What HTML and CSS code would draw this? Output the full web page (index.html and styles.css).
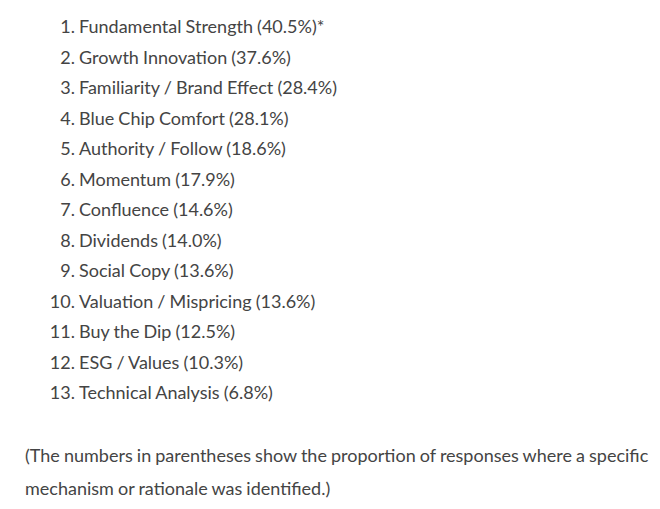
FILE: index.html
```html
<!DOCTYPE html>
<html lang="en">
<head>
<meta charset="utf-8">
<link rel="stylesheet" href="styles.css">
</head>
<body>
<div class="content">
  <ol class="ranking">
    <li>Fundamental Strength (40.5%)*</li>
    <li>Growth Innovation (37.6%)</li>
    <li>Familiarity / Brand Effect (28.4%)</li>
    <li>Blue Chip Comfort (28.1%)</li>
    <li>Authority / Follow (18.6%)</li>
    <li>Momentum (17.9%)</li>
    <li>Confluence (14.6%)</li>
    <li>Dividends (14.0%)</li>
    <li>Social Copy (13.6%)</li>
    <li>Valuation / Mispricing (13.6%)</li>
    <li>Buy the Dip (12.5%)</li>
    <li>ESG / Values (10.3%)</li>
    <li>Technical Analysis (6.8%)</li>
  </ol>
  <p class="note">(The numbers in parentheses show the proportion of responses where a specific mechanism or rationale was identified.)</p>
</div>
</body>
</html>
```
FILE: styles.css
```css
html, body {
  margin: 0;
  padding: 0;
  background: #ffffff;
}
body {
  font-family: Lato, "Open Sans", sans-serif;
  color: #444444;
}
.content {
  padding: 11px 0 0 25px;
}
.ranking {
  margin: 0;
  padding-left: 54px;
  font-size: 18px;
  line-height: 30.5px;
  word-spacing: -0.5px;
}
.note {
  margin: 31px 0 0 0;
  font-size: 18px;
  line-height: 33px;
  word-spacing: -0.5px;
}
```
